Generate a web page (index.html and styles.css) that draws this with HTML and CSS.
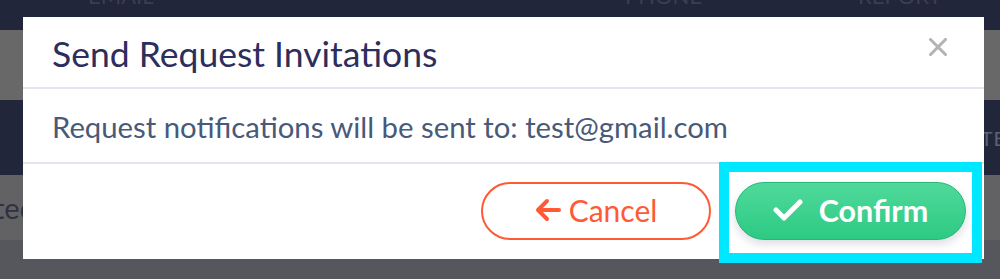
FILE: index.html
```html
<!DOCTYPE html>
<html>
<head>
<meta charset="utf-8">
<link rel="stylesheet" href="styles.css">
</head>
<body>
<div class="page">
  <div class="row row-head">
    <span class="col-label c1">EMAIL</span>
    <span class="col-label c2">PHONE</span>
    <span class="col-label c3">REPORT</span>
  </div>
  <div class="row row-grey"></div>
  <div class="row row-navy"><span class="th-text">TE</span></div>
  <div class="row row-grey2"><span class="cell-text">ted</span></div>
  <div class="row row-bottom"></div>
</div>

<div class="modal">
  <div class="modal-header">
    <h2 class="modal-title">Send Request Invitations</h2>
    <button class="close" aria-label="Close">
      <svg width="18" height="18" viewBox="0 0 18 18"><path d="M1.5 1.5 L16.5 16.5 M16.5 1.5 L1.5 16.5" stroke="#b3b3b3" stroke-width="3" stroke-linecap="square"/></svg>
    </button>
  </div>
  <div class="modal-body">
    <p class="message">Request notifications will be sent to: test@gmail.com</p>
  </div>
  <div class="modal-footer">
    <button class="btn btn-cancel">
      <svg class="ico" width="26" height="24" viewBox="0 0 26 24"><path d="M24 12 H4 M12 3 L3 12 L12 21" fill="none" stroke="#ff5a35" stroke-width="4" stroke-linecap="round" stroke-linejoin="round"/></svg>
      <span>Cancel</span>
    </button>
    <button class="btn btn-confirm">
      <svg class="ico" width="30" height="22" viewBox="0 0 30 22"><path d="M3 11 L11 19 L27 3" fill="none" stroke="#ffffff" stroke-width="5" stroke-linecap="round" stroke-linejoin="round"/></svg>
      <span>Confirm</span>
    </button>
    <div class="highlight"></div>
  </div>
</div>
</body>
</html>
```
FILE: styles.css
```css
* { box-sizing: border-box; }
html, body { margin: 0; padding: 0; }
body {
  width: 1000px;
  height: 279px;
  overflow: hidden;
  font-family: Lato, "Open Sans", sans-serif;
  position: relative;
  background: #55565c;
}
.page {
  display: flex;
  flex-direction: column;
}
.row { position: relative; overflow: hidden; }
.row-head {
  height: 30px;
  background: #22263a;
  display: flex;
}
.col-label {
  font-size: 22px;
  color: #3a3e52;
  line-height: 1;
  margin-top: -15px;
  position: absolute;
}
.c1 { left: 88px; }
.c2 { left: 625px; }
.c3 { left: 858px; }
.row-grey { height: 70px; background: #686868; }
.row-navy {
  height: 75px;
  background: #22263a;
  display: flex;
  align-items: center;
  justify-content: flex-end;
}
.th-text {
  font-size: 20px;
  color: #5d6170;
  margin-right: -6px;
  letter-spacing: 1px;
}
.row-grey2 {
  height: 65px;
  background: #626264;
  display: flex;
  align-items: center;
}
.cell-text {
  font-size: 29px;
  color: #2e3140;
  margin-left: -6px;
}
.row-bottom { height: 39px; background: #56575d; }

.modal {
  position: absolute;
  left: 23px;
  top: 17px;
  width: 961px;
  height: 242px;
  background: #ffffff;
  display: flex;
  flex-direction: column;
}
.modal-header {
  height: 72px;
  border-bottom: 2px solid #e1e6ec;
  display: flex;
  align-items: center;
  justify-content: space-between;
  padding: 0 37px 0 29px;
}
.modal-title {
  margin: 0;
  font-weight: 400;
  font-size: 35.5px;
  color: #2c2e5d;
  line-height: 1;
  padding-top: 4px;
}
.close {
  border: 0;
  background: none;
  padding: 0;
  width: 18px;
  height: 18px;
  margin-top: -10px;
  display: flex;
}
.modal-body {
  height: 75px;
  border-bottom: 2px solid #e1e6ec;
  display: flex;
  align-items: center;
  padding: 0 29px;
}
.message {
  margin: 0;
  font-size: 29.3px;
  color: #485979;
  line-height: 1;
  padding-top: 2px;
}
.modal-footer {
  flex: 1;
  position: relative;
  display: flex;
  justify-content: flex-end;
  align-items: flex-start;
  gap: 24px;
  padding: 18px 18px 0 0;
}
.btn {
  height: 58px;
  width: 230px;
  border-radius: 29px;
  display: flex;
  align-items: center;
  justify-content: center;
  gap: 8px;
  font-family: Lato, sans-serif;
  font-size: 30px;
  padding: 0 0 2px 0;
  cursor: pointer;
}
.btn-cancel {
  background: #ffffff;
  border: 2px solid #ff5a35;
  color: #ff5a35;
}
.btn-confirm {
  width: 231px;
  background: linear-gradient(#4fd99a, #2dca84);
  border: 1px solid #27b676;
  color: #ffffff;
  font-weight: 700;
  font-size: 30.5px;
  gap: 16px;
  box-shadow: 0 4px 8px rgba(60, 60, 110, 0.18);
}
.btn .ico { flex: none; }
.highlight {
  position: absolute;
  left: 696px;
  top: -2px;
  width: 263px;
  height: 101px;
  border: 10px solid #00e8ff;
  pointer-events: none;
}
```
